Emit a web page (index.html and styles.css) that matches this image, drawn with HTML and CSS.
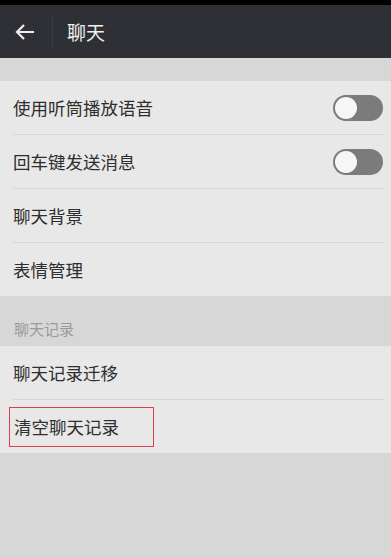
FILE: index.html
```html
<html>
<head>
	<meta charset="utf-8">
	<link rel="stylesheet" href="styles.css">
	<title>聊天</title>
</head>
<body>
	<div class="status"></div>
	<div class="header">
		<span class="back">
			<svg width="20" height="16" viewBox="0 0 20 16"><path d="M19 8H2M9 1L2 8l7 7" fill="none" stroke="#f0f0f0" stroke-width="2.2"/></svg>
		</span>
		<span class="sep"></span>
		<span class="title">聊天</span>
	</div>
	<div class="gap"></div>
	<ul class="list">
		<li><span>使用听筒播放语音</span><span class="switch"></span></li>
		<li><span>回车键发送消息</span><span class="switch"></span></li>
		<li><span>聊天背景</span></li>
		<li class="last"><span>表情管理</span></li>
	</ul>
	<div class="section">聊天记录</div>
	<ul class="list">
		<li><span>聊天记录迁移</span></li>
		<li class="last"><span class="marked">清空聊天记录</span></li>
	</ul>
</body>
</html>
```

FILE: styles.css
```css
body {
	margin: 0;
	background-color: #d7d7d7;
	font-family: "Noto Sans CJK SC", "Noto Sans", sans-serif;
}
.status {
	height: 5px;
	background-color: #000;
}
.header {
	height: 53px;
	background-color: #2f3035;
	display: flex;
	align-items: center;
}
.back {
	width: 52px;
	padding-left: 15px;
	box-sizing: border-box;
	display: flex;
	align-items: center;
}
.sep {
	width: 1px;
	height: 32px;
	background-color: #3c3d42;
}
.title {
	margin-left: 14px;
	color: #f0f0f0;
	font-size: 19px;
}
.gap {
	height: 23px;
}
.list {
	list-style-type: none;
	margin: 0;
	padding: 0;
	background-color: #e8e8e8;
}
.list li {
	height: 53px;
	margin: 0 7px 0 13px;
	border-bottom: 1px solid #d6d6d6;
	display: flex;
	align-items: center;
	justify-content: space-between;
	font-size: 17.5px;
	color: #2e2e2e;
}
.list li.last {
	border-bottom: none;
}
.switch {
	width: 50px;
	height: 26px;
	margin-right: 1px;
	border-radius: 13px;
	background-color: #7b7b7b;
	position: relative;
}
.switch:after {
	content: "";
	position: absolute;
	left: 2px;
	top: 2px;
	width: 22px;
	height: 22px;
	border-radius: 50%;
	background-color: #f6f6f6;
}
.section {
	height: 50px;
	padding-left: 14px;
	box-sizing: border-box;
	padding-top: 22px;
	font-size: 15px;
	color: #9a9a9a;
}
.marked {
	margin-left: -4px;
	padding: 6px 34px 7px 4px;
	border: 1px solid #d9404c;
}
```
